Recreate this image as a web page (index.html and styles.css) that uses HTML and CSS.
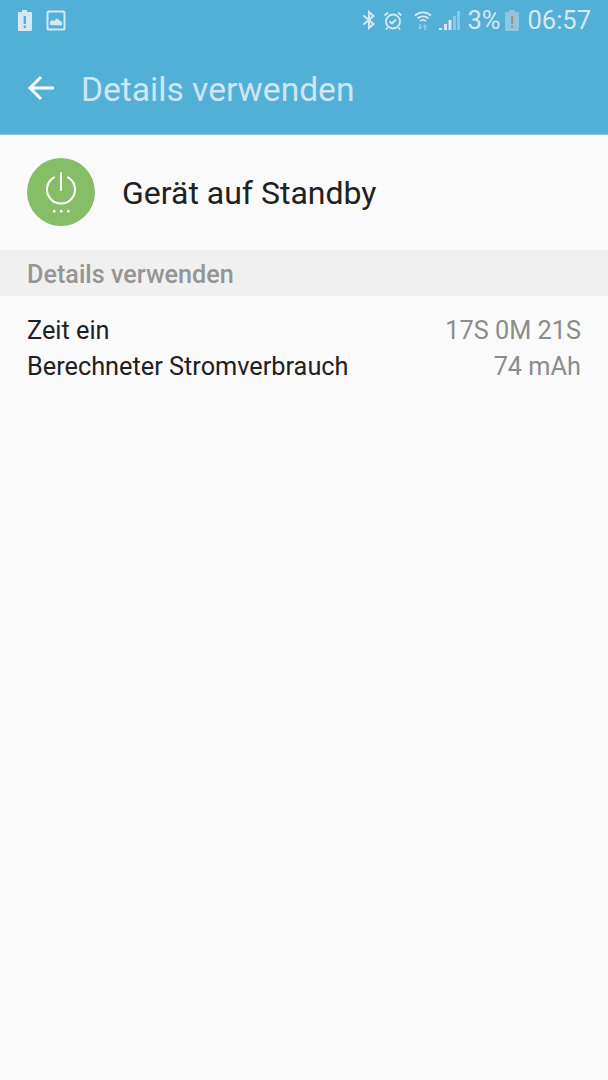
FILE: index.html
```html
<!DOCTYPE html>
<html lang="de">
<head>
    <meta charset="UTF-8">
    <meta name="viewport" content="width=device-width, initial-scale=1.0">
    <title>Details verwenden</title>
    <link rel="stylesheet" href="styles.css">
</head>
<body>
    <header class="appbar">
        <div class="statusbar">
            <div class="status-left">
                <svg class="icon" width="16" height="21" viewBox="0 0 16 21">
                    <path fill="#d6e9f3" fill-rule="evenodd" d="M5 0h5v2h4a1 1 0 0 1 1 1v17a1 1 0 0 1-1 1H2a1 1 0 0 1-1-1V3a1 1 0 0 1 1-1h3zM6.600 6v8h2.400V6zM6.600 15.500v2.500h2.400v-2.500z"/>
                </svg>
                <svg class="icon" width="20" height="21" viewBox="0 0 20 21">
                    <rect x="1.500" y="1.500" width="17" height="18" rx="1.500" fill="none" stroke="#d6e9f3" stroke-width="2"/>
                    <path fill="#d6e9f3" d="M4 15v-3l2-2 2 1 3-2.500 2 1.500 1.500 1 1.500 1v3.500z"/>
                </svg>
            </div>
            <div class="status-right">
                <svg class="icon bt" width="14" height="20" viewBox="0 0 14 18">
                    <path fill="none" stroke="#d6e9f3" stroke-width="2" d="M1.500 4.500l10 8.500-4.500 4V1l4.500 4-10 8.500"/>
                </svg>
                <svg class="icon alarm" width="20" height="21" viewBox="0 0 20 20">
                    <circle cx="10" cy="11" r="7" fill="none" stroke="#d6e9f3" stroke-width="1.800"/>
                    <path fill="none" stroke="#d6e9f3" stroke-width="1.800" d="M6.500 11l2.500 2 4-4M1.500 5l3.500-3M18.500 5l-3.500-3M4.500 17l-1.500 2M15.500 17l1.500 2"/>
                </svg>
                <svg class="icon wifi" width="18" height="21" viewBox="0 0 18 21">
                    <path fill="none" stroke="#d6e9f3" stroke-width="1.800" d="M1 5.500c4.500-4.300 11.500-4.300 16 0M3.500 8.500c3-2.900 8-2.900 11 0M6 11.200c1.700-1.500 4.300-1.500 6 0"/>
                    <path fill="#8fc6e0" d="M5 14h2v3h1.500l-2.500 3-2.500-3H5zM12 20h-2v-3H8.500l2.500-3 2.500 3H12z"/>
                </svg>
                <svg class="icon signal" width="21" height="21" viewBox="0 0 21 21">
                    <path fill="#d6e9f3" d="M0 18h3v2H0zM5 14h3v6H5zM9.500 10h3v10h-3z"/>
                    <path fill="#8fc6e0" d="M14 6h3v14h-3zM18 1h3v19h-3z"/>
                </svg>
                <span class="percent">3%</span>
                <svg class="icon batt" width="14" height="21" viewBox="0 0 14 21">
                    <path fill="#8fc6e0" d="M4 0h6v2h3a1 1 0 0 1 1 1v17a1 1 0 0 1-1 1H1a1 1 0 0 1-1-1V3a1 1 0 0 1 1-1h3z"/>
                    <path fill="#b08a88" d="M6 6h2.200v8H6zM6 15.500h2.200V18H6z"/>
                </svg>
                <span class="clock">06:57</span>
            </div>
        </div>
        <div class="toolbar">
            <svg class="back" width="28" height="26" viewBox="0 0 28 26">
                <path fill="none" stroke="#fff" stroke-width="3" d="M27 13H3M14 2L3 13l11 11"/>
            </svg>
            <h1 class="title">Details verwenden</h1>
        </div>
    </header>

    <section class="app-row">
        <div class="app-icon">
            <svg width="68" height="68" viewBox="0 0 68 68">
                <path fill="none" stroke="#fff" stroke-width="2" stroke-linecap="round" d="M27 19.400a14 14 0 1 0 14 0"/>
                <path fill="none" stroke="#fff" stroke-width="2" stroke-linecap="round" d="M34 15v17"/>
                <rect x="26" y="52" width="2.500" height="2.500" fill="#fff"/>
                <rect x="33" y="52" width="2.500" height="2.500" fill="#fff"/>
                <rect x="40" y="52" width="2.500" height="2.500" fill="#fff"/>
            </svg>
        </div>
        <span class="app-name">Gerät auf Standby</span>
    </section>

    <div class="section-head">Details verwenden</div>

    <section class="details">
        <div class="detail-row">
            <span>Zeit ein</span>
            <span class="value">17S 0M 21S</span>
        </div>
        <div class="detail-row">
            <span>Berechneter Stromverbrauch</span>
            <span class="value">74 mAh</span>
        </div>
    </section>
</body>
</html>
```

FILE: styles.css
```css
/* page */
html, body {
    height: 100%;
}

body {
    margin: 0;
    background: #fafafa;
    color: #212121;
    font-family: Roboto, "Liberation Sans", sans-serif;
}

/* blue header */
.appbar {
    height: 135px;
    background: #52afd6;
    box-sizing: border-box;
    border-bottom: 1px solid #8fc2da;
}

.statusbar {
    height: 42px;
    display: flex;
    justify-content: space-between;
    align-items: center;
    padding: 0 17px 2px 17px;
    box-sizing: border-box;
}

.status-left,
.status-right {
    display: flex;
    align-items: center;
}

.status-left {
    gap: 13px;
}

.status-right {
    color: #d6e9f3;
}

.icon {
    display: block;
}

.alarm {
    margin-left: 7px;
}

.wifi {
    margin-left: 11px;
}

.signal {
    margin-left: 7px;
}

.percent {
    font-size: 25.500px;
    margin-left: 7px;
}

.batt {
    margin-left: 5px;
}

.clock {
    font-size: 25.500px;
    margin-left: 8px;
}

.toolbar {
    height: 92px;
    display: flex;
    align-items: center;
    padding: 0 0 0 27px;
}

.back {
    margin-right: 27px;
}

.title {
    margin: 2px 0 0 -1px;
    font-size: 33.600px;
    font-weight: 400;
    color: #cfe6f2;
}

/* app row */
.app-row {
    height: 115px;
    box-sizing: border-box;
    padding: 0 27px 1px;
    display: flex;
    align-items: center;
}

.app-icon {
    width: 68px;
    height: 68px;
    border-radius: 50%;
    background: #86bd67;
    margin-right: 27px;
}

.app-icon svg {
    display: block;
}

.app-name {
    font-size: 32px;
    margin-top: 2px;
}

/* section header */
.section-head {
    height: 46px;
    line-height: 49px;
    background: #f0f0f0;
    padding: 0 27px;
    font-size: 25.200px;
    font-weight: 500;
    color: #959595;
}

/* rows */
.details {
    padding: 17px 27px 0;
}

.detail-row {
    display: flex;
    justify-content: space-between;
    height: 36px;
    line-height: 36px;
    font-size: 25.300px;
}

.value {
    color: #8c8c8c;
}
```
